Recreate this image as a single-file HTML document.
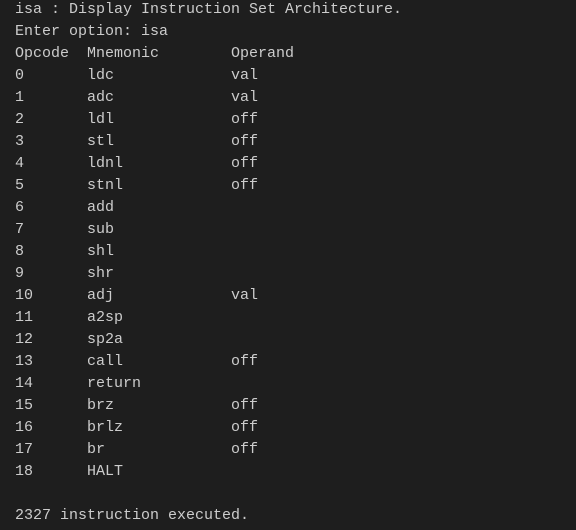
<!DOCTYPE html>
<html><head><style>
html,body{margin:0;padding:0;background:#1e1e1e;width:576px;height:530px;overflow:hidden}
pre{margin:0;position:absolute;left:15px;top:-1px;font-family:"Liberation Mono",monospace;font-size:15px;line-height:22px;color:#cccccc}
</style></head><body>
<pre>isa : Display Instruction Set Architecture.
Enter option: isa
Opcode  Mnemonic        Operand
0       ldc             val
1       adc             val
2       ldl             off
3       stl             off
4       ldnl            off
5       stnl            off
6       add
7       sub
8       shl
9       shr
10      adj             val
11      a2sp
12      sp2a
13      call            off
14      return
15      brz             off
16      brlz            off
17      br              off
18      HALT

2327 instruction executed.</pre>
</body></html>
